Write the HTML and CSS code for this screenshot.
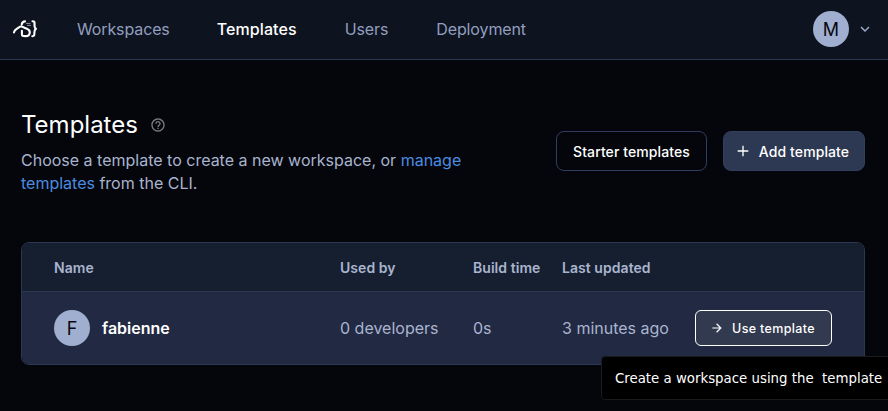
FILE: index.html
```html
<!DOCTYPE html>
<html lang="en">
<head>
<meta charset="utf-8">
<title>Templates</title>
<link rel="stylesheet" href="styles.css">
</head>
<body>
<header class="navbar">
  <svg class="logo" viewBox="0 0 26 20" fill="none" stroke="#fff" stroke-linecap="round" stroke-linejoin="round">
    <path d="M2 13.400C2.500 10.500 5 9.500 8.200 7.600c1.500-.7 2.800.4 4.300 1.200 2.200.9 5.300 1.200 5.300 4.400 0 3-1.600 3.900-4.300 3.900-3.600 0-3.700-.4-3.600-2.400v-3M13 2.400c-2 0-2.700.8-3.300 3M20.500 2.300c2.300 0 2.100 1.200 2 3.200-.1 2.300 0 3.400 1.500 4.300-1.500.8-1.600 1.800-1.600 3.700 0 2.800-.1 3.700-2.100 3.700" stroke-width="2.100"/>
    <path d="M14.500 4.400h3.500M15.500 6.400h3" stroke-width="1" stroke="#8f96a3"/>
  </svg>
  <nav class="links">
    <a>Workspaces</a><a class="active">Templates</a><a>Users</a><a>Deployment</a>
  </nav>
  <div class="user">
    <span class="avatar">M</span>
    <svg class="chevron" viewBox="0 0 10 6" fill="none" stroke="#a0aecf" stroke-width="1.400"><path d="M1 1l4 4 4-4"/></svg>
  </div>
</header>
<main>
  <div class="page-header">
    <div class="intro">
      <h1>Templates
        <svg class="help" viewBox="0 0 24 24" fill="#7a7c80"><path d="M11 18h2v-2h-2v2zm1-16C6.480 2 2 6.480 2 12s4.480 10 10 10 10-4.480 10-10S17.520 2 12 2zm0 18c-4.410 0-8-3.590-8-8s3.590-8 8-8 8 3.590 8 8-3.590 8-8 8zm0-14c-2.210 0-4 1.790-4 4h2c0-1.100.9-2 2-2s2 .9 2 2c0 2-3 1.750-3 5h2c0-2.250 3-2.500 3-5 0-2.210-1.790-4-4-4z"/></svg>
      </h1>
      <p>Choose a template to create a new workspace, or <a>manage templates</a> from the CLI.</p>
    </div>
    <div class="actions">
      <button class="btn outline">Starter templates</button>
      <button class="btn filled"><svg class="plus" viewBox="0 0 24 24" fill="currentColor"><path d="M20 13h-7v7h-2v-7H4v-2h7V4h2v7h7v2z"/></svg>Add template</button>
    </div>
  </div>
  <div class="table">
    <div class="row head"><span>Name</span><span>Used by</span><span>Build time</span><span>Last updated</span></div>
    <div class="row body">
      <div class="name"><span class="avatar">F</span><strong>fabienne</strong></div>
      <span>0 developers</span><span>0s</span><span>3 minutes ago</span>
      <button class="use"><svg class="arrow" viewBox="0 0 24 24" fill="currentColor"><path d="M12 4l-1.410 1.410L16.170 11H4v2h12.170l-5.580 5.590L12 20l8-8z"/></svg>Use template</button>
    </div>
  </div>
</main>
<div class="tooltip">Create a workspace using the&nbsp; template</div>
</body>
</html>
```
FILE: styles.css
```css
* { box-sizing: border-box; }
body {
  margin: 0;
  height: 411px;
  overflow: hidden;
  background: #04060b;
  color: #a9b4ce;
  font: 400 16px/24px Inter, sans-serif;
}
.navbar {
  display: flex;
  align-items: center;
  height: 60px;
  padding: 0 18px 1px 12px;
  background: #0d131f;
  border-bottom: 1px solid #2c3752;
}
.logo { width: 26px; height: 20px; }
.links { display: flex; gap: 48px; margin-left: 39px; color: #929fbf; letter-spacing: -0.12px; }
.links .active { margin-left: -1px; color: #fff; font-weight: 500; letter-spacing: 0.1px; }
.user { display: flex; align-items: center; gap: 11px; margin-left: auto; }
.avatar {
  display: flex;
  align-items: center;
  justify-content: center;
  width: 36px;
  height: 36px;
  padding-top: 1px;
  border-radius: 50%;
  background: #a0aecf;
  color: #06080f;
  font-size: 18px;
}
.chevron { width: 10px; height: 6px; }
main { padding: 48px 23px 0 21px; }
.page-header { display: flex; align-items: center; justify-content: space-between; height: 86px; }
.intro { width: 460px; }
h1 {
  display: flex;
  align-items: center;
  gap: 12px;
  margin: 0 0 7px;
  color: #fff;
  font-size: 24px;
  font-weight: 400;
  line-height: 34px;
}
.help { width: 16px; height: 16px; }
p { margin: 0; line-height: 23px; }
p a { color: #4d8be0; }
.actions { display: flex; gap: 16px; }
button {
  display: flex;
  align-items: center;
  justify-content: center;
  font: 500 14px Inter, sans-serif;
  letter-spacing: 0.1px;
  color: #fff;
  white-space: nowrap;
}
.btn { height: 40px; border-radius: 8px; border: 1px solid #2f3e60; }
.outline { width: 151px; background: transparent; }
.filled { width: 142px; padding: 0 15px 0 11px; background: #2d3853; border-color: #313e5d; }
.plus { flex: none; width: 16px; height: 16px; margin-right: 8px; }
.table {
  margin-top: 48px;
  height: 123px;
  border: 1px solid #2b3852;
  border-radius: 8px;
  overflow: hidden;
}
.row {
  display: grid;
  grid-template-columns: 286px 133px 89px 133px 137px;
  align-items: center;
  padding-left: 32px;
}
.head { height: 49px; padding-top: 2px; background: #161f30; border-bottom: 1px solid #2b3852; font-size: 14px; font-weight: 600; letter-spacing: 0.05px; }
.body { height: 72px; background: #222942; }
.name { display: flex; align-items: center; gap: 12px; color: #fff; }
.name strong { font-weight: 600; }
.use { height: 36px; padding: 0 2px 0 0; border: 1px solid #fff; border-radius: 6px; background: #323a4f; font-size: 12.5px; letter-spacing: 0.35px; }
.arrow { width: 14px; height: 14px; margin-right: 8px; }
.tooltip {
  position: absolute;
  left: 601px;
  top: 356px;
  width: 300px;
  height: 44px;
  padding: 1px 13px 0;
  border: 1px solid #181a1e;
  border-radius: 4px;
  background: #000;
  color: #fff;
  font: 13.333px/42px "DejaVu Sans", sans-serif;
  white-space: nowrap;
}
```
